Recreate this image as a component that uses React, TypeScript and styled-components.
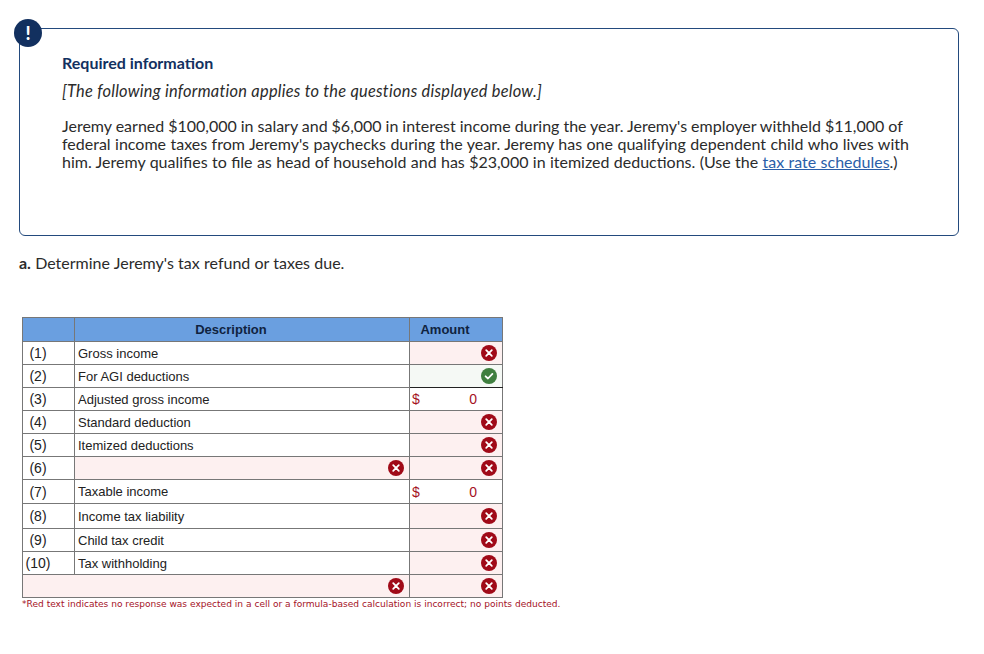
import React from 'react';
import styled, { createGlobalStyle } from 'styled-components';

const GlobalStyle = createGlobalStyle`
  html, body {
    margin: 0;
    padding: 0;
    background: #ffffff;
  }
`;

const Page = styled.div`
  width: 984px;
  height: 654px;
  box-sizing: border-box;
  padding: 28px 25px 0 19px;
  overflow: hidden;
  font-family: Lato, "Open Sans", sans-serif;
  color: #2b2b2b;
`;

const InfoBox = styled.div`
  position: relative;
  box-sizing: border-box;
  height: 208px;
  padding: 24px 42px 0 42px;
  border: 1px solid #234a7d;
  border-radius: 6px;
`;

const Badge = styled.div`
  position: absolute;
  left: -6px;
  top: -10px;
  width: 28px;
  height: 28px;
  border-radius: 50%;
  background: #12305f;
  color: #ffffff;
  font-size: 18px;
  font-weight: 900;
  line-height: 28px;
  text-align: center;
`;

const InfoTitle = styled.div`
  font-size: 16px;
  line-height: 20px;
  font-weight: 700;
  color: #12305f;
`;

const InfoNote = styled.div`
  margin-top: 8px;
  font-size: 16.4px;
  line-height: 20px;
  letter-spacing: 0.25px;
  font-style: italic;
`;

const InfoText = styled.div`
  margin-top: 16px;
  font-size: 16px;
  line-height: 18px;
`;

const TextLine = styled.span<{ $spacing: number }>`
  display: block;
  white-space: nowrap;
  word-spacing: ${props => props.$spacing}px;
`;

const TextLink = styled.a`
  color: #2a5ea8;
  text-decoration: underline;
`;

const Question = styled.p`
  margin: 17px 0 0;
  font-size: 16px;
  line-height: 20px;
  word-spacing: 0.15px;
`;

const Worksheet = styled.table`
  margin: 44px 0 0 3px;
  width: 480px;
  table-layout: fixed;
  border-collapse: collapse;
  font-family: "Liberation Sans", Arial, sans-serif;
  font-size: 13px;
  color: #222222;
`;

const HeadCell = styled.th`
  height: 24px;
  padding: 0 22px 0 0;
  box-sizing: border-box;
  background: #6a9fe0;
  border: 1px solid #777777;
  font-size: 13px;
  font-weight: 700;
  color: #10233f;
  text-align: center;
`;

const Row = styled.tr<{ $height: number }>`
  height: ${props => props.$height}px;
`;

const NumCell = styled.td`
  padding: 0 21px 0 0;
  border: 1px solid #777777;
  text-align: center;
  font-size: 14px;
`;

const Cell = styled.td<{ $tone?: 'bad' | 'good' }>`
  padding: 0 5px 0 3px;
  box-sizing: border-box;
  border: 1px solid #777777;
  border-bottom-color: ${props => (props.$tone === 'good' ? '#222222' : '#777777')};
  background: ${props =>
    props.$tone === 'bad' ? '#fdf0f0' : props.$tone === 'good' ? '#f5f9f5' : '#ffffff'};
`;

const CellInner = styled.div<{ $right?: boolean }>`
  display: flex;
  align-items: center;
  justify-content: ${props => (props.$right ? 'flex-end' : 'flex-start')};
`;

const MoneyCell = styled.div`
  display: flex;
  align-items: center;
  justify-content: space-between;
  padding-right: 20px;
  margin-left: -1px;
  color: #a5121f;
  font-size: 14px;
`;

const StatusIcon = styled.svg`
  display: block;
  width: 16px;
  height: 16px;
  flex: none;
`;

const Footnote = styled.div`
  margin: 0 0 0 3px;
  font-family: "DejaVu Sans", Verdana, sans-serif;
  font-size: 9.07px;
  line-height: 12px;
  color: #a5121f;
`;

const Wrong = () => (
  <StatusIcon viewBox="0 0 16 16">
    <circle cx="8" cy="8" r="8" fill="#a00a18" />
    <path d="M5.2 5.2l5.6 5.6M10.8 5.2l-5.6 5.6" stroke="#fff" strokeWidth="1.8" strokeLinecap="round" />
  </StatusIcon>
);

const Right = () => (
  <StatusIcon viewBox="0 0 16 16">
    <circle cx="8" cy="8" r="8" fill="#3f7f3f" />
    <path d="M4.6 8.3l2.4 2.2 4.4-4.6" stroke="#fff" strokeWidth="1.8" fill="none" strokeLinecap="round" strokeLinejoin="round" />
  </StatusIcon>
);

type Line = {
  num: string;
  label: string;
  height: number;
  kind: 'wrong' | 'right' | 'money';
  labelWrong?: boolean;
};

const lines: Line[] = [
  { num: '(1)', label: 'Gross income', height: 23, kind: 'wrong' },
  { num: '(2)', label: 'For AGI deductions', height: 23, kind: 'right' },
  { num: '(3)', label: 'Adjusted gross income', height: 23, kind: 'money' },
  { num: '(4)', label: 'Standard deduction', height: 23, kind: 'wrong' },
  { num: '(5)', label: 'Itemized deductions', height: 23, kind: 'wrong' },
  { num: '(6)', label: '', height: 23, kind: 'wrong', labelWrong: true },
  { num: '(7)', label: 'Taxable income', height: 24, kind: 'money' },
  { num: '(8)', label: 'Income tax liability', height: 25, kind: 'wrong' },
  { num: '(9)', label: 'Child tax credit', height: 23, kind: 'wrong' },
  { num: '(10)', label: 'Tax withholding', height: 23, kind: 'wrong' },
  { num: '', label: '', height: 23, kind: 'wrong', labelWrong: true },
];

const AmountCell = ({ kind }: { kind: Line['kind'] }) => {
  if (kind === 'money') {
    return (
      <Cell>
        <MoneyCell>
          <span>$</span>
          <span>0</span>
        </MoneyCell>
      </Cell>
    );
  }
  return (
    <Cell $tone={kind === 'right' ? 'good' : 'bad'}>
      <CellInner $right>{kind === 'right' ? <Right /> : <Wrong />}</CellInner>
    </Cell>
  );
};

const App: React.FC = () => (
  <Page>
    <GlobalStyle />
    <InfoBox>
      <Badge>!</Badge>
      <InfoTitle>Required information</InfoTitle>
      <InfoNote>[The following information applies to the questions displayed below.]</InfoNote>
      <InfoText>
        <TextLine $spacing={-0.12}>
          Jeremy earned $100,000 in salary and $6,000 in interest income during the year. Jeremy's employer withheld $11,000 of
        </TextLine>
        <TextLine $spacing={0.35}>
          federal income taxes from Jeremy's paychecks during the year. Jeremy has one qualifying dependent child who lives with
        </TextLine>
        <TextLine $spacing={0.27}>
          him. Jeremy qualifies to file as head of household and has $23,000 in itemized deductions. (Use the{' '}
          <TextLink href="#">tax rate schedules</TextLink>.)
        </TextLine>
      </InfoText>
    </InfoBox>
    <Question>
      <b>a.</b> Determine Jeremy's tax refund or taxes due.
    </Question>
    <Worksheet>
      <colgroup>
        <col style={{ width: 52 }} />
        <col style={{ width: 335 }} />
        <col style={{ width: 93 }} />
      </colgroup>
      <thead>
        <tr>
          <HeadCell />
          <HeadCell>Description</HeadCell>
          <HeadCell>Amount</HeadCell>
        </tr>
      </thead>
      <tbody>
        {lines.map((line, i) =>
          line.num === '' ? (
            <Row key={i} $height={line.height}>
              <Cell $tone="bad" colSpan={2}>
                <CellInner $right>
                  <Wrong />
                </CellInner>
              </Cell>
              <AmountCell kind={line.kind} />
            </Row>
          ) : (
            <Row key={i} $height={line.height}>
              <NumCell>{line.num}</NumCell>
              <Cell $tone={line.labelWrong ? 'bad' : undefined}>
                <CellInner $right={line.labelWrong}>{line.labelWrong ? <Wrong /> : line.label}</CellInner>
              </Cell>
              <AmountCell kind={line.kind} />
            </Row>
          ),
        )}
      </tbody>
    </Worksheet>
    <Footnote>*Red text indicates no response was expected in a cell or a formula-based calculation is incorrect; no points deducted.</Footnote>
  </Page>
);

export default App;
